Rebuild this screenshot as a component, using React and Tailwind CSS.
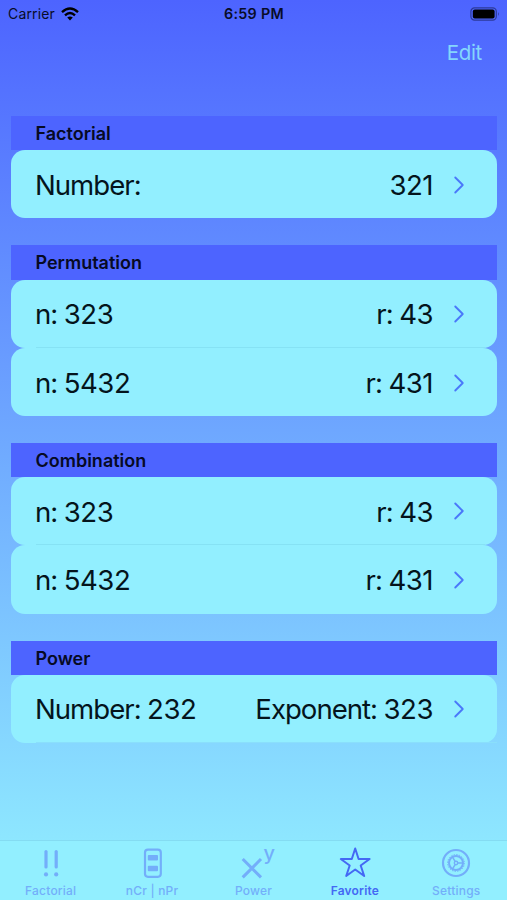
import { ChevronRight } from "lucide-react";

const SECTIONS = [
  { title: "Factorial", rows: [[["Number:", ""], ["", "321"]]] },
  {
    title: "Permutation",
    rows: [
      [["n:", "323"], ["r:", "43"]],
      [["n:", "5432"], ["r:", "431"]],
    ],
  },
  {
    title: "Combination",
    rows: [
      [["n:", "323"], ["r:", "43"]],
      [["n:", "5432"], ["r:", "431"]],
    ],
  },
  { title: "Power", rows: [[["Number:", "232"], ["Exponent:", "323"]]], underline: true },
];

function FactorialIcon() {
  return (
    <svg width="34" height="34" viewBox="0 0 34 34" fill="currentColor">
      <rect x="10.4" y="4" width="3.2" height="18.6" rx="1.6" />
      <rect x="20.6" y="4" width="3.2" height="18.6" rx="1.6" />
      <circle cx="12" cy="28.4" r="2.1" />
      <circle cx="22.2" cy="28.4" r="2.1" />
    </svg>
  );
}

function FractionIcon() {
  return (
    <svg width="34" height="34" viewBox="0 0 34 34" fill="currentColor">
      <rect x="10" y="3.6" width="15.8" height="27.2" rx="3" fill="none" stroke="currentColor" strokeWidth="2.2" />
      <rect x="12.8" y="9" width="10.2" height="5.4" rx="0.9" />
      <rect x="12.8" y="19.8" width="10.2" height="5.4" rx="0.9" />
    </svg>
  );
}

function PowerIcon() {
  return (
    <svg className="overflow-visible" width="34" height="34" viewBox="0 0 34 34" fill="currentColor">
      <path d="M6.7 13 L25 31.4 M25 13 L6.7 31.4" stroke="currentColor" strokeWidth="3" />
      <text x="27.4" y="13.6" fontSize="20" fontWeight="500">y</text>
    </svg>
  );
}

function StarIcon() {
  return (
    <svg width="34" height="34" viewBox="0 0 34 34" fill="none" stroke="currentColor" strokeWidth="2" strokeLinejoin="round">
      <path d="M17.2 2.5 L20.6 13 H31.6 L22.7 19.5 L26.2 30 L17.2 23.5 L8.2 30 L11.7 19.5 L2.8 13 H13.8 Z" />
    </svg>
  );
}

function SettingsIcon() {
  return (
    <svg width="34" height="34" viewBox="0 0 34 34" fill="none" stroke="currentColor">
      <circle cx="17" cy="17" r="13" strokeWidth="2.2" />
      <circle cx="17" cy="17" r="7" strokeWidth="2" />
      <circle cx="17" cy="17" r="8.4" strokeWidth="1" strokeDasharray="1.4 1.24" />
      <circle cx="17" cy="17" r="1.7" strokeWidth="1.4" />
      <path d="M18.8 17 H24 M16.1 15.4 L13.4 10.8 M16.1 18.6 L13.4 23.2" strokeWidth="1.5" />
    </svg>
  );
}

const TABS = [
  { label: "Factorial", icon: FactorialIcon },
  { label: "nCr | nPr", icon: FractionIcon },
  { label: "Power", icon: PowerIcon },
  { label: "Favorite", icon: StarIcon, active: true },
  { label: "Settings", icon: SettingsIcon },
];

function StatusBar() {
  return (
    <div className="grid grid-cols-3 items-center h-[27px] pl-[8px] pr-[7px] text-[14px] text-[#080c28]">
      <div className="flex items-center gap-[6px]">
        <span className="tracking-[0.15px]">Carrier</span>
        <svg width="18" height="14" viewBox="0 0 18 14" fill="none" stroke="#000" strokeWidth="2.4">
          <path d="M1 5.2 Q9 -2 17 5.2" />
          <path d="M4 8.3 Q9 3.8 14 8.3" />
          <path d="M6.2 10.6 Q9 8.3 11.8 10.6 L9 13.6 Z" fill="#000" stroke="none" />
        </svg>
      </div>
      <span className="text-center text-[14.3px] tracking-[0.3px] font-semibold whitespace-nowrap">6:59 PM</span>
      <svg className="justify-self-end" width="30" height="14" viewBox="0 0 30 14">
        <rect x="0.9" y="0.9" width="25.4" height="12.2" rx="3.6" fill="none" stroke="#2c3a99" strokeWidth="1.2" />
        <rect x="2.8" y="2.6" width="21.8" height="8.8" rx="2" fill="#000" />
        <path d="M28 5 Q29.8 7 28 9 Z" fill="#2c3a99" />
      </svg>
    </div>
  );
}

function Field({ label, value }) {
  return (
    <span className="flex gap-[6.5px]">
      {label && <span className="tracking-[-1px]">{label}</span>}
      {value && <span className="tracking-[-0.5px]">{value}</span>}
    </span>
  );
}

function Row({ left, right, divider }) {
  return (
    <div className="flex flex-col h-[68.2px] rounded-[14px] bg-[#92efff] text-[27.6px] text-[#04141c]">
      <div className="flex flex-1 items-center justify-between pt-[3.4px] pl-[24px] pr-[23px]">
        <Field label={left[0]} value={left[1]} />
        <div className="flex items-center gap-[11px]">
          <Field label={right[0]} value={right[1]} />
          <ChevronRight className="-mt-[2px] text-[#4a78fa]" size={30} strokeWidth={1.5} />
        </div>
      </div>
      {divider && <div className={`h-px ml-[25px] ${divider}`} />}
    </div>
  );
}

export default function App() {
  return (
    <div className="flex flex-col w-[507px] h-[900px] overflow-hidden bg-linear-to-b/srgb from-[#4d64ff] to-[#92f0ff] font-['Inter',sans-serif]">
      <StatusBar />
      <div className="flex justify-end h-[89px] pt-[11px] pr-[25px]">
        <span className="text-[20.5px] leading-[30px] tracking-[-0.3px] text-[#84d6fc]">Edit</span>
      </div>
      <div className="flex flex-col gap-[27px] pl-[11px] pr-[10px]">
        {SECTIONS.map(({ title, rows, underline }) => (
          <section key={title}>
            <h2 className="flex items-center h-[34.2px] pt-[1px] pl-[24.5px] bg-[#4d64ff] text-[18px] font-semibold text-[#060a24]">
              {title}
            </h2>
            {rows.map(([left, right], i) => (
              <Row
                key={i}
                left={left}
                right={right}
                divider={underline ? "bg-[#8adffc]" : i < rows.length - 1 ? "bg-[#86e2f4] mr-[12px]" : null}
              />
            ))}
          </section>
        ))}
      </div>
      <nav className="mt-auto grid grid-cols-5 h-[60px] border-t border-[#84dcf2] bg-[#92efff]">
        {TABS.map(({ label, icon: Icon, active }) => (
          <div
            key={label}
            className={`flex flex-col items-center pt-[5px] ${active ? "text-[#4468f4] font-semibold" : "text-[#73aefa] font-medium"}`}
          >
            <Icon />
            <span className="mt-[3px] text-[12px] leading-[16px] tracking-[0.2px]">{label}</span>
          </div>
        ))}
      </nav>
    </div>
  );
}
